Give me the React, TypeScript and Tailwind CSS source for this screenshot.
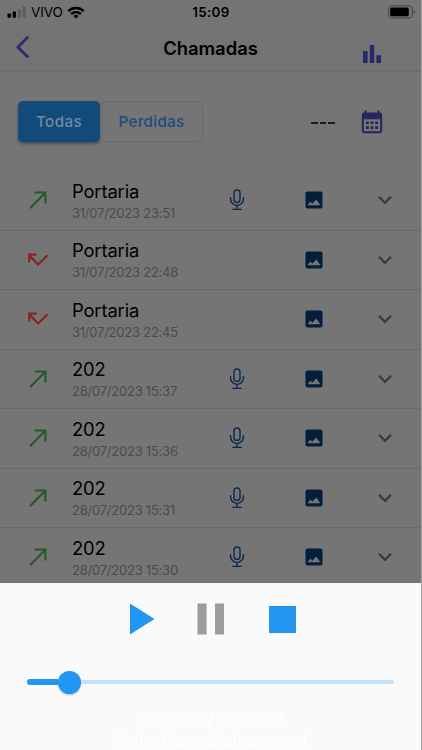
type Call = {
  name: string;
  date: string;
  missed?: boolean;
  audio?: boolean;
};

const calls: Call[] = [
  { name: "Portaria", date: "31/07/2023 23:51", audio: true },
  { name: "Portaria", date: "31/07/2023 22:48", missed: true },
  { name: "Portaria", date: "31/07/2023 22:45", missed: true },
  { name: "202", date: "28/07/2023 15:37", audio: true },
  { name: "202", date: "28/07/2023 15:36", audio: true },
  { name: "202", date: "28/07/2023 15:31", audio: true },
  { name: "202", date: "28/07/2023 15:30", audio: true },
];

function StatusBar() {
  return (
    <div className="flex h-6 shrink-0 items-center text-black">
      <div className="flex w-[190px] items-center pl-[7px]">
        <svg width="20" height="12" viewBox="0 0 20 12">
          <rect x="0.5" y="7.5" width="3.4" height="4.2" rx="0.8" />
          <rect x="5.6" y="5.6" width="3.4" height="6.1" rx="0.8" />
          <rect x="10.7" y="3" width="3.4" height="8.7" rx="0.8" fill="#5e5e5e" />
          <rect x="15.6" y="0.4" width="3.4" height="11.3" rx="0.8" fill="#5e5e5e" />
        </svg>
        <span className="ml-[4px] mt-px w-[32px] text-[13.5px] leading-none tracking-[-0.1px]">VIVO</span>
        <svg className="ml-[4px]" width="18" height="13" viewBox="0 0 18 13" fill="none" stroke="#000" strokeWidth="2.4">
          <path d="M1.3 5.2a11 11 0 0 1 15.4 0" />
          <path d="M4.2 8.1a6.9 6.9 0 0 1 9.6 0" />
          <path d="M9 12.4 6.4 9.9a3.8 3.8 0 0 1 5.2 0z" fill="#000" stroke="none" />
        </svg>
      </div>
      <span className="mt-px w-[42px] text-center text-[13.4px] font-semibold leading-none tracking-[0.3px]">15:09</span>
      <svg className="ml-[156px]" width="28" height="14" viewBox="0 0 28 14">
        <rect x="0.6" y="0.9" width="23.8" height="12" rx="3.2" fill="none" stroke="#444" />
        <rect x="2.2" y="2.5" width="18.6" height="8.8" rx="1.6" />
        <path d="M25.6 4.9c1.4.7 1.4 3.3 0 4z" fill="#444" />
      </svg>
    </div>
  );
}

function Header() {
  return (
    <header className="flex h-[48px] shrink-0 items-start border-b-2 border-[#6b6b6b] bg-[#737373]">
      <svg className="ml-[15px] mt-[11px]" width="15" height="24" viewBox="0 0 15 24" fill="none" stroke="#2b2e6c" strokeWidth="2.8" strokeLinecap="round" strokeLinejoin="round">
        <path d="M12.4 2.6 2.8 12.2 12.4 21.6" />
      </svg>
      <h1 className="ml-[120px] mt-[12px] w-[121px] text-center text-[18.4px] font-semibold leading-6 text-black">
        Chamadas
      </h1>
      <svg className="ml-[91px] mt-[20px]" width="20" height="20" viewBox="0 0 20 20" fill="#262963">
        <path d="M1 7h4.6v12H1zM7.8 1h4.4v18H7.8zM14.4 11.2H19V19h-4.6z" />
      </svg>
    </header>
  );
}

function Filters() {
  return (
    <div className="flex h-[99px] shrink-0 items-start">
      <div className="ml-[18px] mt-[29px] flex h-[41px] w-[185px]">
        <button className="h-[41px] w-[82px] rounded-[5px] bg-[#124a7a] pt-px text-[15.2px] font-medium tracking-[0.4px] text-[#708ba3] shadow-[0_2px_3px_#00000055]">
          Todas
        </button>
        <button className="h-[41px] w-[103px] rounded-[5px] border border-[#6a6a6a] pt-px text-[15.2px] font-medium tracking-[0.3px] text-[#1b4d7c]">
          Perdidas
        </button>
      </div>
      <div className="ml-[108px] mt-[50px] flex gap-[2px]">
        <span className="h-[2px] w-[6.6px] bg-[#1a1a1a]" />
        <span className="h-[2px] w-[6.6px] bg-[#1a1a1a]" />
        <span className="h-[2px] w-[6.6px] bg-[#1a1a1a]" />
      </div>
      <svg className="ml-[26px] mt-[38px]" width="22" height="24" viewBox="0 0 22 24">
        <path d="M3.6 0.5h2v2h10.8v-2h2v2h.6A2.2 2.2 0 0 1 21.2 4.7V21A2.2 2.2 0 0 1 19 23.2H3A2.2 2.2 0 0 1 .8 21V4.7A2.2 2.2 0 0 1 3 2.5h.6z" fill="#23265f" />
        <path d="M2.8 9.2h16.4v12H2.8z" fill="#757575" />
        <path d="M5 11.5h2.8v2.6H5zm4.6 0h2.8v2.6H9.6zm4.6 0H17v2.6h-2.8zM5 16.3h2.8v2.6H5zm4.6 0h2.8v2.6H9.6zm4.6 0H17v2.6h-2.8z" fill="#23265f" />
      </svg>
    </div>
  );
}

function OutgoingIcon() {
  return (
    <svg width="22" height="20" viewBox="0 0 22 20" fill="none" stroke="#265a2a" strokeWidth="2.2">
      <path d="M3 18.2 18 3M7.600 2.500h10.800v11" />
    </svg>
  );
}

function MissedIcon() {
  return (
    <svg width="22" height="20" viewBox="0 0 22 20" fill="none" stroke="#85271f" strokeWidth="2.2">
      <path d="M20.5 5.2 11.2 14.5 2.6 5.9M2.2 12.2V4.7h7.4" />
    </svg>
  );
}

function MicIcon() {
  return (
    <svg width="16" height="22" viewBox="0 0 16 22" fill="none" stroke="#0d2a49" strokeWidth="1.4" strokeLinecap="round">
      <rect x="5" y="1" width="6" height="12.4" rx="3" />
      <path d="M1.6 8.600v1.600a6.400 6.200 0 0 0 12.800 0V8.600M8 16.600v3.600M3.800 20.400h8.400" />
    </svg>
  );
}

function PhotoIcon() {
  return (
    <svg width="18" height="18" viewBox="0 0 18 18">
      <rect x="0.5" y="0.5" width="17" height="17" rx="2" fill="#031f3c" />
      <path d="M2.6 14.3 5.3 10.5 7.3 12.7 11.3 8.6 15.4 14.3z" fill="#757575" />
    </svg>
  );
}

function ChevronIcon() {
  return (
    <svg width="14" height="10" viewBox="0 0 14 10" fill="none" stroke="#3b3b3b" strokeWidth="2.3">
      <path d="M1 1.8 7 7.800 13 1.800" />
    </svg>
  );
}

function CallRow({ call }: { call: Call }) {
  return (
    <div className="flex h-[59.5px] shrink-0 items-center border-b-[1.5px] border-[#6a6a6a] pt-[0.4px]">
      <div className="ml-[27px] w-[45px]">{call.missed ? <MissedIcon /> : <OutgoingIcon />}</div>
      <div className="w-[157px] pt-[1.5px]">
        <div className="text-[18.4px] leading-[23px] tracking-[-0.15px] text-black">{call.name}</div>
        <div className="text-[13px] leading-[20px] tracking-[-0.23px] text-[#4b4b4d]">{call.date}</div>
      </div>
      <div className="w-[75.5px]">{call.audio && <MicIcon />}</div>
      <div className="w-[73.5px]">
        <PhotoIcon />
      </div>
      <ChevronIcon />
    </div>
  );
}

function Player() {
  return (
    <section className="flex h-[167px] shrink-0 flex-col bg-[#fafafa]">
      <div className="flex h-[72px] items-center pl-[130px]">
        <svg width="25" height="32" viewBox="0 0 25 32" fill="#2196f3">
          <path d="M0 0.5 24.5 16 0 31.5z" />
        </svg>
        <svg className="ml-[42px]" width="28" height="32" viewBox="0 0 28 32" fill="#9c9c9c">
          <path d="M0.5 0.5h9v31h-9zM18 0.5h9v31h-9z" />
        </svg>
        <div className="ml-[44px] h-[27px] w-[27px] bg-[#2196f3]" />
      </div>
      <div className="flex h-[54px] items-center px-[27px]">
        <div className="h-[6.5px] w-[31px] rounded-l-full bg-[#2196f3]" />
        <div className="h-[23px] w-[23px] rounded-full bg-[#2196f3] shadow-[0_1px_2px_#00000040]" />
        <div className="h-[4px] flex-1 rounded-r-full bg-[#c5e1f7]" />
      </div>
      <div className="pt-px text-center text-white">
        <div className="text-[18px] leading-[22px]">0:00:00 / 0:00:08</div>
        <div className="text-[15.8px] leading-[18px]">State: PlayerState.paused</div>
      </div>
    </section>
  );
}

export default function App() {
  return (
    <main className="h-[750px] w-[422px] overflow-hidden border-r border-[#a3a3a3] bg-[#757575] font-['Inter','Liberation_Sans',sans-serif]">
      <div className="flex h-[583px] flex-col overflow-hidden">
        <StatusBar />
        <Header />
        <Filters />
        {calls.map((call) => (
          <CallRow key={call.date} call={call} />
        ))}
      </div>
      <Player />
    </main>
  );
}
